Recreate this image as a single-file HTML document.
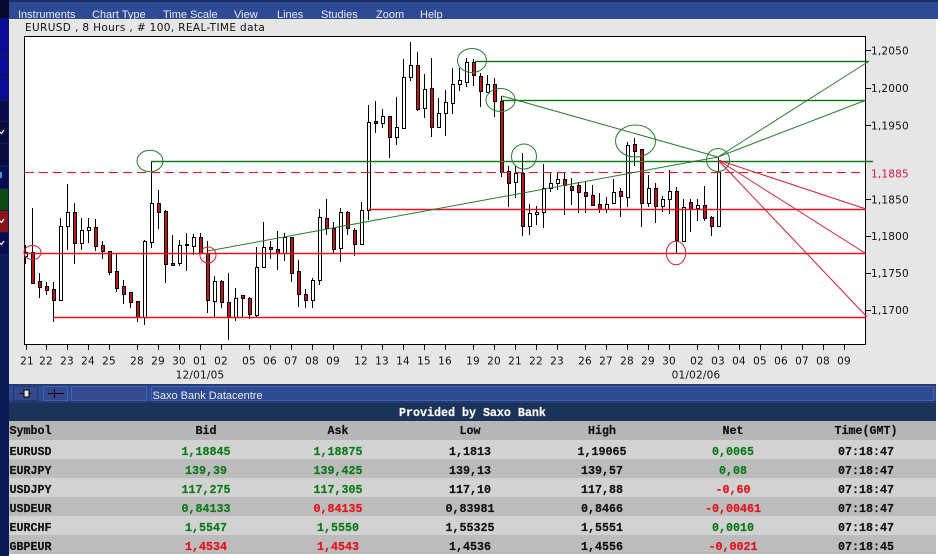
<!DOCTYPE html>
<html><head><meta charset="utf-8"><title>EURUSD chart</title>
<style>
html,body{margin:0;padding:0;background:#fff;width:938px;height:556px;overflow:hidden}
svg{display:block}
.c{font-family:"DejaVu Sans",sans-serif;font-size:10.5px;letter-spacing:.2px;fill:#111}
.m{font-family:"Liberation Sans",sans-serif;font-size:11px;fill:#e6ebf5}
.x text{text-anchor:middle}
.t text{font-family:"Liberation Mono",monospace;font-weight:bold;font-size:11.67px;fill:#111;stroke:#111;stroke-width:.2px}
.k text{text-anchor:middle}
.t text.g{fill:#0b7a16;stroke:#0b7a16}
.t text.r{fill:#e80f1c;stroke:#e80f1c}
.t text.w{fill:#fff;stroke:#fff}
</style></head><body>
<svg width="938" height="556" viewBox="0 0 938 556" xmlns="http://www.w3.org/2000/svg">
<rect width="938" height="556" fill="#fff"/>
<!-- left strip -->
<g shape-rendering="crispEdges">
<rect x="0" y="0" width="9" height="556" fill="#0a1c55"/>
<rect x="0" y="0" width="9" height="18" fill="#08082c"/>
<rect x="0" y="19" width="8" height="35" fill="#0a0a96"/>
<rect x="0" y="56" width="8" height="20" fill="#0a0a96"/>
<rect x="0" y="78" width="8" height="21" fill="#0a0a96"/>
<rect x="0" y="101" width="8" height="20" fill="#0a0a4a"/>
<rect x="0" y="122" width="8" height="21" fill="#0a0a40"/>
<rect x="0" y="144" width="8" height="21" fill="#0a0a40"/>
<rect x="0" y="167" width="8" height="21" fill="#0a0a50"/>
<rect x="0" y="172" width="2" height="6" fill="#2aa0c0"/>
<rect x="0" y="189" width="8" height="21" fill="#0d4a14"/>
<rect x="0" y="211" width="8" height="21" fill="#8a1414"/>
<rect x="0" y="233" width="8" height="21" fill="#0a0a50"/>
</g>
<path d="M0 132l1.500 1.500L4 130M0 221l1.500 1.500L4 219M0 243l1.500 1.500L4 241" fill="none" stroke="#fff" stroke-width="1.200"/>
<!-- main panel -->
<g shape-rendering="crispEdges">
<rect x="9" y="0" width="927" height="384" fill="#e6e6e6"/>
<rect x="9" y="0" width="929" height="2" fill="#1c2f68"/>
<rect x="9" y="2" width="929" height="17" fill="#2f4a94"/>
<rect x="936" y="19" width="2" height="537" fill="#fff"/>
<rect x="24" y="36" width="841" height="308" fill="#fff"/>
<path d="M24.500 345V36.500H865.500V344.500H24" fill="none" stroke="#000"/>
</g>
<g class="m">
<text x="18" y="18">Instruments</text><text x="92" y="18">Chart Type</text><text x="163" y="18">Time Scale</text><text x="234" y="18">View</text><text x="277" y="18">Lines</text><text x="321" y="18">Studies</text><text x="376" y="18">Zoom</text><text x="420" y="18">Help</text>
</g>
<text class="c" x="25" y="31" textLength="240">EURUSD , 8 Hours , # 100, REAL-TIME data</text>
<!-- wicks -->
<path shape-rendering="crispEdges" stroke="#000" fill="none" d="M25.500 245V264M32.500 208V284M39.500 273V298M46.500 282V295M53.500 282V322M60.500 218V300M67.500 184V250M74.500 203V264M81.500 218V250M88.500 218V243M95.500 219V251M102.500 241V259M109.500 251V275M116.500 254V292M123.500 280V304M130.500 292V308M137.500 301V322M144.500 240V325M151.500 161V248M158.500 190V229M165.500 210V283M172.500 235V266M179.500 240V266M186.500 233V271M193.500 234V255M200.500 233V254M207.500 241V313M214.500 276V317M221.500 280V308M228.500 273V340M235.500 288V321M242.500 295V317M249.500 297V319M256.500 247V317M263.500 222V268M270.500 241V259M277.500 231V270M284.500 233V261M291.500 237V282M298.500 260V307M305.500 289V308M312.500 278V308M319.500 209V285M326.500 199V235M333.500 222V253M340.500 208V262M347.500 211V235M354.500 228V256M361.500 202V244M368.500 105V220M375.500 101V133M382.500 109V128M389.500 116V158M396.500 97V145M403.500 59V128M410.500 42V81M417.500 52V111M424.500 74V118M431.500 58V137M438.500 98V127M445.500 90V136M452.500 68V114M459.500 68V91M466.500 58V87M473.500 59V86M480.500 73V107M487.500 75V93M494.500 78V117M501.500 96V177M508.500 166V207M515.500 166V198M522.500 153V236M529.500 204V235M536.500 206V225M543.500 164V228M550.500 172V192M557.500 173V190M564.500 173V215M571.500 178V205M578.500 182V213M585.500 182V213M592.500 185V205M599.500 193V213M606.500 197V213M613.500 179V203M620.500 188V217M627.500 142V207M634.500 138V166M641.500 149V227M648.500 175V207M655.500 183V223M662.500 196V212M669.500 170V214M676.500 187V253M683.500 199V241M690.500 199V232M697.500 199V221M704.500 186V221M711.500 216V236M718.500 157V226"/>
<!-- bodies white -->
<path shape-rendering="crispEdges" stroke="#000" fill="#fff" d="M24.500 252.500h3v4h-3zM59.500 226.500h3v74h-3zM66.500 212.500h3v14h-3zM80.500 230.500h3v13h-3zM87.500 227.500h3v3h-3zM143.500 241.500h3v76h-3zM150.500 203.500h3v39h-3zM178.500 245.500h3v18h-3zM185.500 244.500h3v1h-3zM192.500 237.500h3v9h-3zM213.500 281.500h3v20h-3zM234.500 298.500h3v19h-3zM255.500 267.500h3v48h-3zM262.500 247.500h3v20h-3zM283.500 237.500h3v16h-3zM311.500 280.500h3v20h-3zM318.500 217.500h3v63h-3zM339.500 212.500h3v36h-3zM360.500 210.500h3v34h-3zM367.500 122.500h3v88h-3zM381.500 116.500h3v7h-3zM395.500 127.500h3v10h-3zM402.500 77.500h3v51h-3zM409.500 65.500h3v12h-3zM423.500 89.500h3v19h-3zM437.500 113.500h3v14h-3zM444.500 102.500h3v11h-3zM451.500 84.500h3v19h-3zM458.500 80.500h3v4h-3zM465.500 62.500h3v20h-3zM486.500 84.500h3v8h-3zM514.500 173.500h3v9h-3zM528.500 213.500h3v13h-3zM535.500 212.500h3v2h-3zM542.500 188.500h3v24h-3zM549.500 183.500h3v5h-3zM556.500 179.500h3v4h-3zM605.500 204.500h3v5h-3zM612.500 192.500h3v11h-3zM626.500 145.500h3v52h-3zM647.500 188.500h3v15h-3zM661.500 199.500h3v7h-3zM668.500 191.500h3v8h-3zM682.500 207.500h3v34h-3zM696.500 205.500h3v3h-3zM717.500 172.500h3v54h-3z"/>
<!-- bodies red -->
<path shape-rendering="crispEdges" stroke="#000" fill="#c01418" d="M31.500 252.500h3v31h-3zM38.500 281.500h3v6h-3zM45.500 286.500h3v4h-3zM52.500 289.500h3v11h-3zM73.500 212.500h3v31h-3zM94.500 227.500h3v19h-3zM101.500 245.500h3v6h-3zM108.500 251.500h3v21h-3zM115.500 271.500h3v17h-3zM122.500 286.500h3v8h-3zM129.500 292.500h3v10h-3zM136.500 301.500h3v16h-3zM157.500 203.500h3v9h-3zM164.500 211.500h3v53h-3zM171.500 263.500h3v2h-3zM199.500 237.500h3v16h-3zM206.500 253.500h3v47h-3zM220.500 281.500h3v21h-3zM227.500 302.500h3v15h-3zM241.500 295.500h3v3h-3zM248.500 298.500h3v16h-3zM269.500 247.500h3v2h-3zM276.500 249.500h3v4h-3zM290.500 237.500h3v36h-3zM297.500 271.500h3v23h-3zM304.500 294.500h3v6h-3zM325.500 218.500h3v10h-3zM332.500 228.500h3v21h-3zM346.500 212.500h3v16h-3zM353.500 230.500h3v14h-3zM374.500 121.500h3v2h-3zM388.500 116.500h3v21h-3zM416.500 65.500h3v44h-3zM430.500 88.500h3v39h-3zM472.500 62.500h3v13h-3zM479.500 76.500h3v15h-3zM493.500 84.500h3v17h-3zM500.500 101.500h3v71h-3zM507.500 171.500h3v12h-3zM521.500 173.500h3v53h-3zM563.500 179.500h3v6h-3zM570.500 186.500h3v4h-3zM577.500 185.500h3v7h-3zM584.500 192.500h3v4h-3zM591.500 195.500h3v10h-3zM598.500 204.500h3v5h-3zM619.500 191.500h3v5h-3zM633.500 144.500h3v7h-3zM640.500 149.500h3v54h-3zM654.500 188.500h3v18h-3zM675.500 191.500h3v49h-3zM689.500 202.500h3v7h-3zM703.500 205.500h3v13h-3zM710.500 217.500h3v9h-3z"/>
<!-- horizontal lines: soft halo plus solid core -->
<g shape-rendering="crispEdges">
<rect x="475" y="60" width="394" height="3" fill="#0f6e14" fill-opacity=".18"/>
<rect x="502" y="99" width="363" height="3" fill="#0f6e14" fill-opacity=".18"/>
<rect x="151" y="160" width="722" height="3" fill="#0f6e14" fill-opacity=".22"/>
<rect x="25" y="252" width="841" height="3" fill="#e0141e" fill-opacity=".25"/>
<rect x="53" y="316" width="813" height="3" fill="#e0141e" fill-opacity=".25"/>
<rect x="369" y="208" width="497" height="3" fill="#e0141e" fill-opacity=".25"/>
<rect x="475" y="61" width="394" height="1" fill="#0f6e14"/>
<rect x="502" y="100" width="363" height="1" fill="#0f6e14"/>
<rect x="151" y="161" width="722" height="1" fill="#0f7a14"/>
<rect x="25" y="253" width="841" height="1" fill="#ee1018"/>
<rect x="53" y="317" width="813" height="1" fill="#ee1018"/>
<rect x="369" y="209" width="497" height="1" fill="#ee1018"/>
<path fill="none" stroke="#e0141e" stroke-dasharray="9 5" d="M25 172.500H865"/>
</g>
<!-- diagonals -->
<g fill="none" stroke="#2a7a32">
<path d="M208 251L718 157M502 96L718 157M718 157L868.500 61.500M718 157L865 100.500"/>
<ellipse cx="150" cy="161" rx="13" ry="10.700"/>
<ellipse cx="472" cy="60.500" rx="14.500" ry="12"/>
<ellipse cx="500.500" cy="100" rx="14.500" ry="11.500"/>
<ellipse cx="524" cy="156.500" rx="12.500" ry="12.500"/>
<ellipse cx="635.500" cy="141" rx="20" ry="16"/>
<ellipse cx="718" cy="160" rx="11.500" ry="11.500"/>
</g>
<g fill="none" stroke="#d0203a">
<path d="M718 160L866 209M718 160L865 253M718 160L867 317"/>
<ellipse cx="32.500" cy="252.500" rx="8.500" ry="7"/>
<ellipse cx="208" cy="255" rx="8" ry="8"/>
<ellipse cx="676" cy="253" rx="9.700" ry="11.700"/>
</g>
<!-- axis ticks -->
<path shape-rendering="crispEdges" stroke="#000" fill="none" d="M26.500 344V350M46.500 344V350M67.500 344V350M88.500 344V350M109.500 344V350M137.500 344V350M158.500 344V350M179.500 344V350M200.500 344V350M221.500 344V350M249.500 344V350M270.500 344V350M291.500 344V350M312.500 344V350M333.500 344V350M361.500 344V350M382.500 344V350M403.500 344V350M424.500 344V350M445.500 344V350M473.500 344V350M494.500 344V350M515.500 344V350M536.500 344V350M557.500 344V350M585.500 344V350M606.500 344V350M627.500 344V350M648.500 344V350M669.500 344V350M697.500 344V350M718.500 344V350M739.500 344V350M760.500 344V350M781.500 344V350M802.500 344V350M823.500 344V350M844.500 344V350M865 50.500H871M865 88.500H871M865 125.500H871M865 199.500H871M865 236.500H871M865 273.500H871M865 310.500H871"/>
<g class="c">
<text x="871" y="54.500">1,2050</text><text x="871" y="92">1,2000</text><text x="871" y="129.500">1,1950</text><text x="871" y="177.500" style="fill:#d8183a">1,1885</text><text x="871" y="203.500">1,1850</text><text x="871" y="240">1,1800</text><text x="871" y="277">1,1750</text><text x="871" y="314">1,1700</text>
</g>
<g class="c x">
<text x="27" y="364.500">21</text><text x="46" y="364.500">22</text><text x="67" y="364.500">23</text><text x="88" y="364.500">24</text><text x="109" y="364.500">25</text><text x="137" y="364.500">28</text><text x="158" y="364.500">29</text><text x="179" y="364.500">30</text><text x="200" y="364.500">01</text><text x="221" y="364.500">02</text><text x="249" y="364.500">05</text><text x="270" y="364.500">06</text><text x="291" y="364.500">07</text><text x="312" y="364.500">08</text><text x="333" y="364.500">09</text><text x="361" y="364.500">12</text><text x="382" y="364.500">13</text><text x="403" y="364.500">14</text><text x="424" y="364.500">15</text><text x="445" y="364.500">16</text><text x="473" y="364.500">19</text><text x="494" y="364.500">20</text><text x="515" y="364.500">21</text><text x="536" y="364.500">22</text><text x="557" y="364.500">23</text><text x="585" y="364.500">26</text><text x="606" y="364.500">27</text><text x="627" y="364.500">28</text><text x="648" y="364.500">29</text><text x="669" y="364.500">30</text><text x="697" y="364.500">02</text><text x="718" y="364.500">03</text><text x="739" y="364.500">04</text><text x="760" y="364.500">05</text><text x="781" y="364.500">06</text><text x="802" y="364.500">07</text><text x="823" y="364.500">08</text><text x="844" y="364.500">09</text>
<text x="200" y="378.500">12/01/05</text><text x="696" y="378.500">01/02/06</text>
</g>
<!-- toolbar -->
<g shape-rendering="crispEdges">
<rect x="9" y="384" width="927" height="19" fill="#2f4a94"/>
<rect x="9" y="384" width="927" height="1.500" fill="#22386e"/>
<rect x="9" y="401" width="927" height="2" fill="#24396f"/>
<rect x="13.500" y="386.500" width="24" height="14" fill="#35498f" stroke="#24396f"/>
<rect x="43.500" y="386.500" width="24" height="14" fill="#35498f" stroke="#4560ac"/>
<rect x="71.500" y="386.500" width="75" height="14" fill="#35498f" stroke="#4560ac"/>
<rect x="151.500" y="386.500" width="782" height="14" fill="#2f4a94" stroke="#4560ac"/>
<path d="M20 393.500H24M29 393.500H31M48 393.500H64M54.500 389V398" stroke="#000" fill="none"/>
<rect x="24" y="390" width="5" height="7" fill="#e6e6e6" stroke="#000"/>
</g>
<text x="152.500" y="399" font-family="Liberation Sans, sans-serif" font-size="11" fill="#e8ecf5">Saxo Bank Datacentre</text>
<!-- table -->
<g shape-rendering="crispEdges">
<rect x="9" y="403" width="927" height="18" fill="#1a3358"/>
<rect x="9" y="421" width="927" height="19" fill="#b6b6b6"/>
<rect x="9" y="440" width="927" height="19" fill="#d2d2d2"/>
<rect x="9" y="459" width="927" height="19" fill="#bcbcbc"/>
<rect x="9" y="478" width="927" height="19" fill="#d2d2d2"/>
<rect x="9" y="497" width="927" height="19" fill="#bcbcbc"/>
<rect x="9" y="516" width="927" height="19" fill="#d2d2d2"/>
<rect x="9" y="535" width="927" height="19" fill="#bcbcbc"/>
</g>
<g class="t">
<text x="399" y="416" class="w">Provided by Saxo Bank</text>
<text x="9.500" y="434">Symbol</text><text x="9.500" y="455">EURUSD</text><text x="9.500" y="474">EURJPY</text><text x="9.500" y="493">USDJPY</text><text x="9.500" y="512">USDEUR</text><text x="9.500" y="531">EURCHF</text><text x="9.500" y="550">GBPEUR</text>
<g class="k">
<text x="206" y="434">Bid</text><text x="338" y="434">Ask</text><text x="470" y="434">Low</text><text x="602" y="434">High</text><text x="733" y="434">Net</text><text x="866" y="434">Time(GMT)</text>
<text x="206" y="455" class="g">1,18845</text><text x="338" y="455" class="g">1,18875</text><text x="470" y="455">1,1813</text><text x="602" y="455">1,19065</text><text x="733" y="455" class="g">0,0065</text><text x="866" y="455">07:18:47</text>
<text x="206" y="474" class="g">139,39</text><text x="338" y="474" class="g">139,425</text><text x="470" y="474">139,13</text><text x="602" y="474">139,57</text><text x="733" y="474" class="g">0,08</text><text x="866" y="474">07:18:47</text>
<text x="206" y="493" class="g">117,275</text><text x="338" y="493" class="g">117,305</text><text x="470" y="493">117,10</text><text x="602" y="493">117,88</text><text x="733" y="493" class="r">-0,60</text><text x="866" y="493">07:18:47</text>
<text x="206" y="512" class="g">0,84133</text><text x="338" y="512" class="r">0,84135</text><text x="470" y="512">0,83981</text><text x="602" y="512">0,8466</text><text x="733" y="512" class="r">-0,00461</text><text x="866" y="512">07:18:47</text>
<text x="206" y="531" class="g">1,5547</text><text x="338" y="531" class="g">1,5550</text><text x="470" y="531">1,55325</text><text x="602" y="531">1,5551</text><text x="733" y="531" class="g">0,0010</text><text x="866" y="531">07:18:47</text>
<text x="206" y="550" class="r">1,4534</text><text x="338" y="550" class="r">1,4543</text><text x="470" y="550">1,4536</text><text x="602" y="550">1,4556</text><text x="733" y="550" class="r">-0,0021</text><text x="866" y="550">07:18:45</text>
</g></g>
</svg>
</body></html>
